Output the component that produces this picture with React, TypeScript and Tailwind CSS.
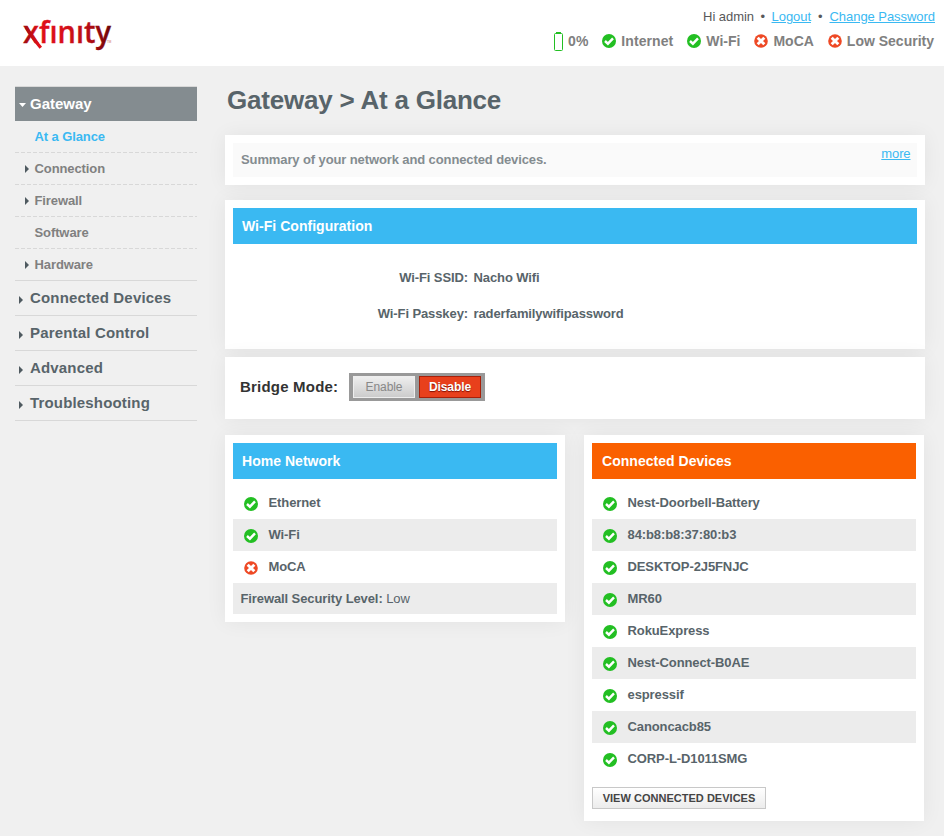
import React from "react";

const Check = ({ className = "" }: { className?: string }) => (
  <svg className={"shrink-0 " + className} width="14" height="14" viewBox="0 0 14 14">
    <circle cx="7" cy="7" r="7" fill="#23bf23" />
    <path d="M3 7 L5.9 9.7 L11 4.4" fill="none" stroke="#fff" strokeWidth="2.4" />
  </svg>
);

const Cross = ({ className = "" }: { className?: string }) => (
  <svg className={"shrink-0 " + className} width="14" height="14" viewBox="0 0 14 14">
    <circle cx="7" cy="7" r="6.8" fill="#ee4925" />
    <path d="M3.7 3.7 L10.3 10.3 M10.3 3.7 L3.7 10.3" fill="none" stroke="#fff" strokeWidth="2.9" />
  </svg>
);

const Arrow = () => (
  <svg className="shrink-0" width="4" height="8" viewBox="0 0 4 8">
    <path d="M0 0 L4 4 L0 8Z" fill="#4f5a60" />
  </svg>
);

const Status = ({ ok, label, className = "" }: { ok: boolean; label: string; className?: string }) => (
  <div className={"ml-[14px] flex items-center " + className}>
    {ok ? <Check /> : <Cross />}
    <span className="ml-[5px]">{label}</span>
  </div>
);

const SubItem = ({ label, arrow, active, last }: { label: string; arrow?: boolean; active?: boolean; last?: boolean }) => (
  <li className="h-8">
    <div className="flex h-[31px] items-center pl-[10px]">
      <span className="flex w-[9.5px]">{arrow && <Arrow />}</span>
      <span className={active ? "text-[#3ab9f2]" : "text-[#808080]"}>{label}</span>
    </div>
    {last ? (
      <div className="h-px bg-[#d8d8d8]" />
    ) : (
      <div className="h-px bg-[repeating-linear-gradient(90deg,#d8d8d8_0,#d8d8d8_4px,transparent_4px,transparent_6px)]" />
    )}
  </li>
);

const MainItem = ({ label }: { label: string }) => (
  <li className="flex h-[35px] items-center border-b border-[#d8d8d8] pl-[4px] text-[15px] tracking-[0.17px] text-[#58646a]">
    <span className="mt-[3px] flex w-[11px]"><Arrow /></span>
    {label}
  </li>
);

const card = "bg-white p-2 shadow-[0_0_20px_rgba(0,0,0,0.06)]";

const Row = ({ label, ok = true, shade }: { label: string; ok?: boolean; shade?: boolean }) => (
  <li className={"flex h-8 items-center pl-[11px] " + (shade ? "bg-[#ececec]" : "")}>
    {ok ? <Check className="mt-[2px]" /> : <Cross className="mt-[2px]" />}
    <span className="ml-[10.5px]">{label}</span>
  </li>
);

const devices = [
  "Nest-Doorbell-Battery",
  "84:b8:b8:37:80:b3",
  "DESKTOP-2J5FNJC",
  "MR60",
  "RokuExpress",
  "Nest-Connect-B0AE",
  "espressif",
  "Canoncacb85",
  "CORP-L-D1011SMG",
];

export default function App() {
  return (
    <div className="h-[836px] w-[944px] overflow-hidden bg-[#f0f0f0] font-['Liberation_Sans',Arial,sans-serif] text-[13px] font-bold leading-4 tracking-[-0.1px] text-[#58646a]">
      <header className="flex h-[66px] justify-between bg-white">
        <svg width="120" height="66" viewBox="0 0 120 66" className="block">
          <defs>
            <linearGradient id="brand" gradientUnits="userSpaceOnUse" x1="23" y1="0" x2="111" y2="0">
              <stop offset="0" stopColor="#9c0b10" />
              <stop offset="0.18" stopColor="#e01018" />
              <stop offset="0.45" stopColor="#d8101a" />
              <stop offset="0.75" stopColor="#b50d14" />
              <stop offset="1" stopColor="#6c0508" />
            </linearGradient>
          </defs>
          <text x="23" y="42.5" textLength="88" lengthAdjust="spacingAndGlyphs" fill="url(#brand)" stroke="url(#brand)" strokeWidth="0.3" className="font-['Open_Sans'] text-[31px] font-semibold tracking-normal">xfınıty</text>
          <path d="M26 27 Q31 36 40.8 47.8" fill="none" stroke="url(#brand)" strokeWidth="3.2" />
          <text x="107" y="42.5" fill="#c66" className="text-[3px] font-normal tracking-normal">TM</text>
        </svg>
        <div className="flex flex-col items-end pr-[9px] pt-[9px]">
          <div className="flex text-[13px] font-normal tracking-[-0.05px] text-[#58585a]">
            <span>Hi admin</span>
            <span className="mx-[6.5px]">•</span>
            <a className="text-[#3ab9f2] underline">Logout</a>
            <span className="mx-[7px]">•</span>
            <a className="text-[#3ab9f2] underline">Change Password</a>
          </div>
          <div className="mt-[7px] mr-px flex h-[18px] items-center text-[14px] tracking-normal text-[#808080]">
            <svg width="9" height="19" viewBox="0 0 9 19" className="mr-[5px]">
              <rect x="0.5" y="1.5" width="8" height="17" rx="1" fill="none" stroke="#23bf23" />
              <rect x="2" y="0" width="5" height="2" fill="#23bf23" />
            </svg>
            <span>0%</span>
            <Status ok label="Internet" className="tracking-[0.08px]" />
            <Status ok label="Wi-Fi" />
            <Status ok={false} label="MoCA" />
            <Status ok={false} label="Low Security" />
          </div>
        </div>
      </header>

      <div className="flex">
        <nav className="ml-[15px] mt-5 w-[182px]">
          <div className="flex h-[35px] items-center border-t border-[#d8d8d8] bg-[#848c90] pl-[4px] text-[15px] tracking-normal text-white">
            <svg width="7" height="4" viewBox="0 0 7 4" className="mr-[4px] mt-[2px]">
              <path d="M0 0H7L3.5 4Z" fill="#fff" />
            </svg>
            Gateway
          </div>
          <ul>
            <SubItem label="At a Glance" active />
            <SubItem label="Connection" arrow />
            <SubItem label="Firewall" arrow />
            <SubItem label="Software" />
            <SubItem label="Hardware" arrow last />
            <MainItem label="Connected Devices" />
            <MainItem label="Parental Control" />
            <MainItem label="Advanced" />
            <MainItem label="Troubleshooting" />
          </ul>
        </nav>

        <main className="ml-[28px] w-[700px]">
          <h1 className="ml-[2px] mt-[18px] h-[51px] text-[26px] leading-[32px] tracking-[-0.22px]">Gateway &gt; At a Glance</h1>

          <section className={card + " h-[50px]"}>
            <div className="flex h-[34px] justify-between bg-[#fafafa] pl-[8px] pr-[6.5px]">
              <p className="mt-[9px] tracking-[-0.11px] text-[#848c90]">Summary of your network and connected devices.</p>
              <a className="mt-[3px] font-normal text-[#3ab9f2] underline">more</a>
            </div>
          </section>

          <section className={card + " mt-[15px] h-[149px]"}>
            <h2 className="flex h-9 items-center bg-[#3ab9f2] pl-[9px] text-[14px] tracking-[0.03px] text-white">Wi-Fi Configuration</h2>
            <div className="mt-[26px] flex">
              <span className="w-[235px] text-right">Wi-Fi SSID:</span>
              <span className="ml-[5.5px]">Nacho Wifi</span>
            </div>
            <div className="mt-[20px] flex">
              <span className="w-[235px] text-right">Wi-Fi Passkey:</span>
              <span className="ml-[5.5px]">raderfamilywifipassword</span>
            </div>
          </section>

          <section className="mt-[8px] flex h-[62px] items-center bg-white pb-[2px] pl-[15px] shadow-[0_0_20px_rgba(0,0,0,0.06)]">
            <span className="w-[109px] text-[15px] tracking-[0.2px] text-[#333]">Bridge Mode:</span>
            <div className="flex h-7 w-[136px] justify-between bg-[#999] p-[3px] pl-[4px] text-[12px]">
              <button className="h-[22px] w-[62px] border border-[#eee] bg-linear-to-b from-[#eee] to-[#ccc] font-normal text-[#888]">Enable</button>
              <button className="mr-px h-[22px] w-[62px] border border-[#a8200a] bg-[#e8401c] text-white [text-shadow:0_1px_1px_#801000]">Disable</button>
            </div>
          </section>

          <div className="mt-4 flex items-start justify-between pr-px">
            <section className={card + " h-[187px] w-[340px]"}>
              <h2 className="flex h-9 items-center bg-[#3ab9f2] pl-[9px] text-[14px] tracking-[0.03px] text-white">Home Network</h2>
              <ul className="mt-2">
                <Row label="Ethernet" />
                <Row label="Wi-Fi" shade />
                <Row label="MoCA" ok={false} />
                <li className="flex h-[31px] items-center whitespace-pre bg-[#ececec] pl-[7.5px]">
                  Firewall Security Level: <span className="font-normal">Low</span>
                </li>
              </ul>
            </section>
            <section className={card + " h-[386px] w-[340px]"}>
              <h2 className="flex h-9 items-center bg-[#fa6000] pl-[10px] text-[14px] tracking-[0.03px] text-white">Connected Devices</h2>
              <ul className="mt-2">
                {devices.map((d, i) => (
                  <Row key={d} label={d} shade={i % 2 === 1} />
                ))}
              </ul>
              <button className="mt-[12px] block h-[22px] w-[174px] border border-[#c8c8c8] bg-linear-to-b from-white to-[#ececec] text-[11px] leading-[20px] tracking-[0.02px] text-[#444]">VIEW CONNECTED DEVICES</button>
            </section>
          </div>
        </main>
      </div>
    </div>
  );
}
